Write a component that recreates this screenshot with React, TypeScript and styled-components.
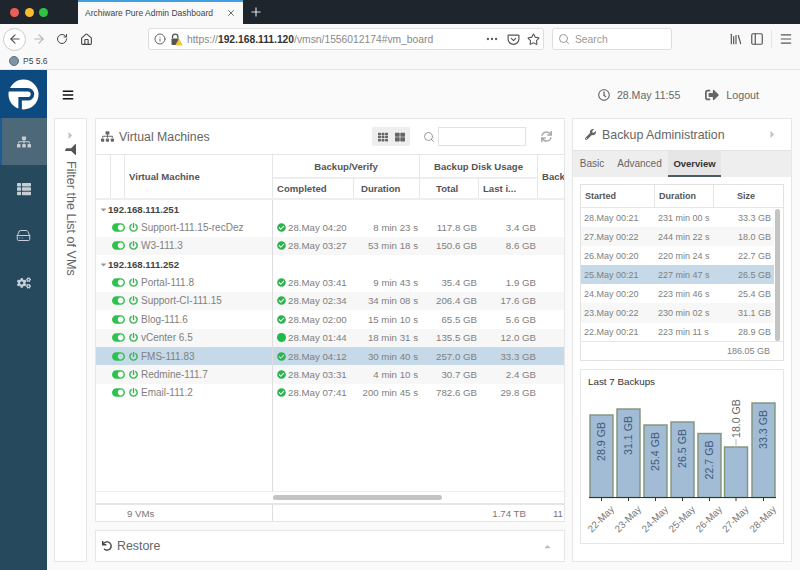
import React from "react";
import styled, { createGlobalStyle } from "styled-components";
import { ArrowLeft, ArrowRight, RotateCw, Home, Info, Ellipsis, Star, Search, Library, PanelLeft, Menu, X, Plus, HardDrive } from "lucide-react";
import { FaSitemap, FaThList, FaCogs, FaFilter, FaWrench, FaUndo, FaRegClock, FaSignOutAlt, FaSync, FaTh, FaThLarge, FaCheckCircle, FaPowerOff, FaToggleOn, FaCaretRight, FaCaretDown, FaCaretUp, FaBars } from "react-icons/fa";

const Global = createGlobalStyle`
  html, body { margin: 0; padding: 0; width: 800px; height: 570px; overflow: hidden; background: #fafafa; }
  * { box-sizing: border-box; }
  body { font-family: "Liberation Sans", Arial, sans-serif; color: #777; }
`;

const Page = styled.div`width: 800px; height: 570px; display: flex; flex-direction: column; overflow: hidden;`;

const TabBar = styled.div`height: 24px; background: #1f252c; display: flex; align-items: stretch; flex: none;`;
const Lights = styled.div`width: 78px; padding-left: 10px; display: flex; align-items: center; gap: 5.5px;`;
const Light = styled.span<{ $c: string }>`width: 9px; height: 9px; border-radius: 50%; background: ${p => p.$c};`;
const BrowserTab = styled.div`width: 165px; background: #f9f9fa; border-top: 2px solid #3f9fe0; display: flex; align-items: center; justify-content: space-between; padding: 0 7px 0 7px; font-size: 8.5px; color: #444; white-space: nowrap;`;
const NewTab = styled.div`width: 26px; display: flex; align-items: center; justify-content: center; color: #ddd;`;

const NavBar = styled.div`height: 30px; background: #f9f9fa; display: flex; align-items: center; flex: none; padding-left: 3px; color: #555;`;
const BackBtn = styled.div`width: 23px; height: 23px; border-radius: 50%; border: 1px solid #ccc; background: #fff; display: flex; align-items: center; justify-content: center; color: #555; flex: none;`;
const NavIcon = styled.div<{ $w: number; $muted?: boolean }>`width: ${p => p.$w}px; flex: none; display: flex; justify-content: center; color: ${p => (p.$muted ? "#b5b5b5" : "#444")};`;
const UrlBar = styled.div`width: 396px; height: 22px; margin-left: 48px; background: #fff; border: 1px solid #ddd; border-radius: 3px; display: flex; align-items: center; padding-left: 5px; flex: none; color: #666;`;
const LockGlyph = styled.svg`margin-left: 4px; flex: none;`;
const UrlText = styled.span`font-size: 10.3px; color: #888; margin-left: 4px; white-space: nowrap; b { color: #333; font-weight: 700; }`;
const UrlTail = styled.div`margin-left: auto; display: flex; align-items: center; gap: 7.5px; padding-right: 3px; color: #555;`;
const SearchBar = styled.div`width: 120px; height: 22px; margin-left: 8px; background: #fff; border: 1px solid #ddd; border-radius: 3px; display: flex; align-items: center; gap: 5px; padding-left: 5px; font-size: 10.3px; color: #999; flex: none;`;
const NavEnd = styled.div`margin-left: auto; display: flex; align-items: center; gap: 7px; padding-right: 7px; color: #555;`;
const Sep = styled.span`width: 1px; height: 18px; background: #e5e5e5;`;

const BookmarkBar = styled.div`height: 16px; background: #f9f9fa; border-bottom: 1px solid #e3e3e3; display: flex; align-items: center; padding: 0 0 1px 9px; gap: 4px; font-size: 8.5px; color: #444; flex: none;`;
const Favicon = styled.span`width: 10px; height: 10px; border-radius: 50%; background: #7d93a6; border: 1px solid #5b6f80; flex: none;`;

const Content = styled.div`flex: 1; display: flex; min-height: 0;`;
const Sidebar = styled.nav`width: 47px; background: #26495e; display: flex; flex-direction: column; flex: none;`;
const Logo = styled.div`height: 48px; background: #0c4a80; display: flex; align-items: center; justify-content: center;`;
const SideItem = styled.div<{ $active?: boolean }>`height: 47px; display: flex; align-items: center; justify-content: center; color: #c5ced4; font-size: 14px; background: ${p => (p.$active ? "#4d6879" : "transparent")}; border-left: 2px solid ${p => (p.$active ? "#1c5c94" : "transparent")}; padding-right: 2px;`;

const Workspace = styled.div`flex: 1; display: flex; flex-direction: column; min-width: 0;`;
const TopBar = styled.header`height: 48px; display: flex; align-items: center; padding: 2px 0 0 15px; color: #666; flex: none;`;
const Burger = styled.span`color: #111; display: flex; font-size: 12px;`;
const Clock = styled.span`margin-left: auto; display: flex; align-items: center; gap: 7px; font-size: 10.6px; svg { font-size: 12px; }`;
const LogoutLink = styled.span`margin: 0 41px 0 25px; display: flex; align-items: center; gap: 7px; font-size: 10.7px; svg { font-size: 14px; }`;

const Panels = styled.div`flex: 1; display: flex; padding: 0 8px 8px 7px; min-height: 0; gap: 7px;`;
const Card = styled.section`background: #fff; border: 1px solid #e6e6e6;`;
const FilterPanel = styled(Card)`width: 33px; margin-right: 1px; flex: none; display: flex; flex-direction: column; align-items: center; padding-top: 11px; color: #666;`;
const FilterLabel = styled.div`writing-mode: vertical-rl; display: flex; align-items: center; gap: 6px; font-size: 12.6px; margin-top: 3px; color: #666; white-space: nowrap; svg { font-size: 11px; transform: rotate(90deg); color: #555; }`;
const CaretBox = styled.span<{ $c?: string }>`display: flex; color: ${p => p.$c || "#c4c4c4"}; font-size: 11px;`;

const MainColumn = styled.div`width: 470px; flex: none; display: flex; flex-direction: column; gap: 8px;`;
const TableCard = styled(Card)`flex: 1; display: flex; flex-direction: column; min-height: 0; overflow: hidden;`;
const PanelHeader = styled.div`height: 35px; display: flex; align-items: center; padding-left: 5px; flex: none; color: #666;`;
const PanelTitle = styled.h2`font-size: 12.3px; font-weight: 400; margin: 0 0 0 5px; color: #666;`;
const ViewToggle = styled.div`margin-left: auto; width: 38px; height: 19px; background: #eee; border-radius: 2px; display: flex; align-items: center; justify-content: space-around; font-size: 10px; color: #666; padding: 0 2px;`;
const SearchGlyph = styled.span`margin-left: 13px; color: #999; display: flex;`;
const SearchBox = styled.div`width: 88px; height: 19px; margin-left: 3px; border: 1px solid #e2e2e2; background: #fff;`;
const Refresh = styled.span`margin: 0 12px 0 15px; color: #aaa; font-size: 11px; display: flex;`;

const COLS = "15px 14px 148px 81px 66px 59px 59px 28px";
const Head = styled.div`display: grid; grid-template-columns: ${COLS}; grid-template-rows: 22px 21px; flex: none; border-top: 1px solid #e6e6e6; border-bottom: 2px solid #eee; overflow: hidden;`;
const HeadCell = styled.div<{ $col: string; $row: string; $align?: string; $pad?: number }>`
  grid-column: ${p => p.$col}; grid-row: ${p => p.$row};
  display: flex; align-items: center; justify-content: ${p => p.$align || "flex-start"};
  padding-left: ${p => p.$pad ?? 0}px; font-size: 9.6px; font-weight: 700; color: #555; white-space: nowrap;
  border-right: 1px solid #e6e6e6;
`;
const SubHeadCell = styled(HeadCell)`border-top: 2px solid #eee;`;

const Body = styled.div`flex: 1; position: relative; min-height: 0; &::before { content: ""; position: absolute; left: 176px; top: 0; bottom: 12px; width: 1px; background: #ddd; }`;
const Rows = styled.div`padding-top: 0;`;
const Row = styled.div<{ $state?: "alt" | "sel" }>`
  display: grid; grid-template-columns: ${COLS}; height: 18.36px; align-items: center; font-size: 9.7px; color: #808080; white-space: nowrap; overflow: hidden;
  background: ${p => (p.$state === "sel" ? "#c6d9e8" : p.$state === "alt" ? "#f7f7f7" : "transparent")};
`;
const GroupRow = styled.div`height: 18.36px; display: flex; align-items: center; padding-left: 3px; gap: 0; font-size: 9.6px; font-weight: 700; color: #444; svg { font-size: 9px; color: #999; }`;
const Toggle = styled.span`grid-column: 1 / 3; padding-left: 16px; display: flex; color: #2ec24d; font-size: 13px;`;
const NameCell = styled.span`display: flex; align-items: center; gap: 3px; padding-left: 4px; font-size: 10px; svg { color: #37b34f; font-size: 9px; flex: none; }`;
const DoneCell = styled.span`display: flex; align-items: center; gap: 2px; padding-left: 4px; svg { color: #2eb24f; font-size: 9px; flex: none; }`;
const Dot = styled.span`width: 9px; height: 9px; border-radius: 50%; background: #1fb84a; flex: none;`;
const NumCell = styled.span`text-align: right; padding-right: 2px;`;

const HScroll = styled.div`position: absolute; left: 177px; width: 169px; bottom: 3px; height: 5px; border-radius: 3px; background: #c4c4c4;`;
const ScrollTrackLine = styled.div`position: absolute; left: 0; right: 0; bottom: 11px; height: 1px; background: #eee;`;
const Foot = styled.div`height: 18px; flex: none; border-top: 2px solid #e6e6e6; display: grid; grid-template-columns: ${COLS}; align-items: center; font-size: 9.7px; color: #777; white-space: nowrap; overflow: hidden;`;
const FootLabel = styled.span`grid-column: 1 / 4; padding-left: 31px; border-right: 1px solid #ddd; height: 100%; display: flex; align-items: center;`;
const FootValue = styled.span<{ $col: string; $pad?: number }>`grid-column: ${p => p.$col}; text-align: right; padding-right: ${p => p.$pad ?? 2}px;`;

const RestoreCard = styled(Card)`height: 32px; flex: none; display: flex; align-items: center; padding: 0 12px 0 6px; font-size: 12.4px; color: #666; gap: 5px; svg { font-size: 10px; color: #444; }`;
const RestoreCaret = styled.span`margin-left: auto; display: flex; svg { color: #bbb; font-size: 9px; }`;

const RightPanel = styled(Card)`width: 220px; flex: none; display: flex; flex-direction: column;`;
const RightHeader = styled.div`height: 31px; display: flex; align-items: center; padding: 0 13px 0 12px; flex: none; gap: 6px; font-size: 12.4px; color: #666; svg { flex: none; }`;
const RightTitle = styled.span`flex: 1; white-space: nowrap;`;
const Tabs = styled.div`height: 27px; background: #eee; display: flex; flex: none; border-top: 1px solid #e3e3e3;`;
const TabItem = styled.div<{ $active?: boolean; $w: number }>`width: ${p => p.$w}px; height: 26px; display: flex; align-items: center; justify-content: center; font-size: ${p => (p.$active ? 9.5 : 10)}px; color: ${p => (p.$active ? "#333" : "#666")}; font-weight: ${p => (p.$active ? 700 : 400)}; background: ${p => (p.$active ? "#e6e6e6" : "transparent")}; border-bottom: 2px solid ${p => (p.$active ? "#4a5c68" : "transparent")};`;
const RightBody = styled.div`padding: 7px 7px 0 7px;`;
const HistTable = styled.div`border: 1px solid #e2e2e2; background: #fff; position: relative; height: 177px;`;
const HIST = "74px 59px 1fr";
const HistHead = styled.div`display: grid; grid-template-columns: ${HIST}; height: 23px; border-bottom: 1px solid #e6e6e6;`;
const HistHeadCell = styled.div<{ $pad: number }>`display: flex; align-items: center; padding-left: ${p => p.$pad}px; font-size: 9px; font-weight: 700; color: #555; border-right: 1px solid #e6e6e6; &:last-child { border-right: 0; }`;
const HistRow = styled.div<{ $state?: "alt" | "sel" }>`display: grid; grid-template-columns: ${HIST}; width: 193px; height: 19.1px; align-items: center; font-size: 9px; color: #7f7f7f; background: ${p => (p.$state === "sel" ? "#c6d9e8" : p.$state === "alt" ? "#f7f7f7" : "transparent")};`;
const HistCell = styled.span<{ $right?: boolean }>`padding-left: ${p => (p.$right ? 0 : 3)}px; padding-right: ${p => (p.$right ? 3 : 0)}px; text-align: ${p => (p.$right ? "right" : "left")};`;
const HistFoot = styled.div`position: absolute; left: 0; right: 0; bottom: 0; height: 19px; border-top: 1px solid #e6e6e6; display: flex; align-items: center; justify-content: flex-end; padding-right: 13px; font-size: 9px; color: #7f7f7f;`;
const VScroll = styled.div`position: absolute; right: 3px; top: 24px; width: 5px; height: 132px; border-radius: 3px; background: #c4c4c4;`;
const ChartCard = styled.div`margin-top: 8px; border: 1px solid #e6e6e6; background: #fff; height: 175px;`;
const ChartTitle = styled.div`height: 22px; padding: 6px 0 0 7px; font-size: 9.8px; color: #333;`;
const ChartSvg = styled.svg`display: block; font-family: "Liberation Sans", Arial, sans-serif;`;

type VM = { name: string; done: string; dur: string; total: string; last: string; state?: "alt" | "sel"; dot?: boolean };
const group1: VM[] = [
  { name: "Support-111.15-recDez", done: "28.May 04:20", dur: "8 min 23 s", total: "117.8 GB", last: "3.4 GB" },
  { name: "W3-111.3", done: "28.May 03:27", dur: "53 min 18 s", total: "150.6 GB", last: "8.6 GB", state: "alt" },
];
const group2: VM[] = [
  { name: "Portal-111.8", done: "28.May 03:41", dur: "9 min 43 s", total: "35.4 GB", last: "1.9 GB" },
  { name: "Support-CI-111.15", done: "28.May 02:34", dur: "34 min 08 s", total: "206.4 GB", last: "17.6 GB", state: "alt" },
  { name: "Blog-111.6", done: "28.May 02:00", dur: "15 min 10 s", total: "65.5 GB", last: "5.6 GB" },
  { name: "vCenter 6.5", done: "28.May 01:44", dur: "18 min 31 s", total: "135.5 GB", last: "12.0 GB", state: "alt", dot: true },
  { name: "FMS-111.83", done: "28.May 04:12", dur: "30 min 40 s", total: "257.0 GB", last: "33.3 GB", state: "sel" },
  { name: "Redmine-111.7", done: "28.May 03:31", dur: "4 min 10 s", total: "30.7 GB", last: "2.4 GB", state: "alt" },
  { name: "Email-111.2", done: "28.May 07:41", dur: "200 min 45 s", total: "782.6 GB", last: "29.8 GB" },
];
const history: { s: string; d: string; z: string; state?: "alt" | "sel" }[] = [
  { s: "28.May 00:21", d: "231 min 00 s", z: "33.3 GB" },
  { s: "27.May 00:22", d: "244 min 22 s", z: "18.0 GB", state: "alt" },
  { s: "26.May 00:20", d: "220 min 24 s", z: "22.7 GB" },
  { s: "25.May 00:21", d: "227 min 47 s", z: "26.5 GB", state: "sel" },
  { s: "24.May 00:20", d: "223 min 46 s", z: "25.4 GB" },
  { s: "23.May 00:22", d: "230 min 02 s", z: "31.1 GB", state: "alt" },
  { s: "22.May 00:21", d: "223 min 11 s", z: "28.9 GB" },
];
const bars = [
  { x: 590, top: 415, v: "28.9 GB", l: "22-May" },
  { x: 617, top: 409, v: "31.1 GB", l: "23-May" },
  { x: 644, top: 425, v: "25.4 GB", l: "24-May" },
  { x: 671, top: 422, v: "26.5 GB", l: "25-May" },
  { x: 698, top: 433.5, v: "22.7 GB", l: "26-May" },
  { x: 724.5, top: 447, v: "18.0 GB", l: "27-May", out: true },
  { x: 752, top: 403, v: "33.3 GB", l: "28-May" },
];

const VMRow = ({ vm }: { vm: VM }) => (
  <Row $state={vm.state}>
    <Toggle><FaToggleOn /></Toggle>
    <NameCell><FaPowerOff />{vm.name}</NameCell>
    <DoneCell>{vm.dot ? <Dot /> : <FaCheckCircle />}{vm.done}</DoneCell>
    <NumCell>{vm.dur}</NumCell>
    <NumCell>{vm.total}</NumCell>
    <NumCell>{vm.last}</NumCell>
  </Row>
);

export default function App() {
  return (
    <Page>
      <Global />
      <TabBar>
        <Lights><Light $c="#ec5f58" /><Light $c="#f6bb2e" /><Light $c="#2cc540" /></Lights>
        <BrowserTab>Archiware Pure Admin Dashboard<X size={10} color="#555" /></BrowserTab>
        <NewTab><Plus size={14} /></NewTab>
      </TabBar>
      <NavBar>
        <BackBtn><ArrowLeft size={14} /></BackBtn>
        <NavIcon $w={26} $muted><ArrowRight size={14} /></NavIcon>
        <NavIcon $w={20}><RotateCw size={12} /></NavIcon>
        <NavIcon $w={28}><Home size={13} /></NavIcon>
        <UrlBar>
          <Info size={12} />
          <LockGlyph width="13" height="13" viewBox="0 0 13 13">
            <path d="M2.5 5.5V3.8a2.7 2.7 0 0 1 5.4 0v1.7" fill="none" stroke="#555" strokeWidth="1.3" />
            <rect x="1.5" y="5.5" width="7.5" height="6.5" rx="1" fill="#555" />
            <path d="M9 5.5l3.8 7H5.2z" fill="#f5c33b" />
          </LockGlyph>
          <UrlText>https://<b>192.168.111.120</b>/vmsn/1556012174#vm_board</UrlText>
          <UrlTail>
            <Ellipsis size={14} />
            <svg width="13" height="13" viewBox="0 0 24 24" fill="none" stroke="currentColor" strokeWidth="2.2" strokeLinecap="round" strokeLinejoin="round"><path d="M3 4h18a1 1 0 0 1 1 1v6a10 10 0 0 1-20 0V5a1 1 0 0 1 1-1z" /><path d="M8 10l4 4 4-4" /></svg>
            <Star size={13} />
          </UrlTail>
        </UrlBar>
        <SearchBar><Search size={12} />Search</SearchBar>
        <NavEnd>
          <Library size={14} />
          <PanelLeft size={14} />
          <Sep />
          <Menu size={14} />
        </NavEnd>
      </NavBar>
      <BookmarkBar><Favicon />P5 5.6</BookmarkBar>
      <Content>
        <Sidebar>
          <Logo>
            <svg width="31" height="31" viewBox="0 0 32 32">
              <circle cx="16" cy="16" r="15.5" fill="#fff" />
              <path d="M0 11h20.5a4.6 4.6 0 0 1 0 9.5H12.5V32" fill="none" stroke="#0c4a80" strokeWidth="3.6" />
            </svg>
          </Logo>
          <SideItem $active><FaSitemap /></SideItem>
          <SideItem><FaThList /></SideItem>
          <SideItem><HardDrive size={15} strokeWidth={1.6} /></SideItem>
          <SideItem><FaCogs /></SideItem>
        </Sidebar>
        <Workspace>
          <TopBar>
            <Burger><FaBars /></Burger>
            <Clock><FaRegClock />28.May 11:55</Clock>
            <LogoutLink><FaSignOutAlt />Logout</LogoutLink>
          </TopBar>
          <Panels>
            <FilterPanel>
              <CaretBox><FaCaretRight /></CaretBox>
              <FilterLabel><FaFilter />Filter the List of VMs</FilterLabel>
            </FilterPanel>
            <MainColumn>
              <TableCard>
                <PanelHeader>
                  <FaSitemap size={13} />
                  <PanelTitle>Virtual Machines</PanelTitle>
                  <ViewToggle><FaTh /><FaThLarge /></ViewToggle>
                  <SearchGlyph><Search size={12} /></SearchGlyph>
                  <SearchBox />
                  <Refresh><FaSync /></Refresh>
                </PanelHeader>
                <Head>
                  <HeadCell $col="1" $row="1 / 3" />
                  <HeadCell $col="2" $row="1 / 3" />
                  <HeadCell $col="3" $row="1 / 3" $pad={4}>Virtual Machine</HeadCell>
                  <HeadCell $col="4 / 6" $row="1" $align="center">Backup/Verify</HeadCell>
                  <HeadCell $col="6 / 8" $row="1" $align="center">Backup Disk Usage</HeadCell>
                  <HeadCell $col="8" $row="1 / 3" $pad={4}>Back</HeadCell>
                  <SubHeadCell $col="4" $row="2" $pad={4}>Completed</SubHeadCell>
                  <SubHeadCell $col="5" $row="2" $pad={7}>Duration</SubHeadCell>
                  <SubHeadCell $col="6" $row="2" $pad={16}>Total</SubHeadCell>
                  <SubHeadCell $col="7" $row="2" $pad={4}>Last i...</SubHeadCell>
                </Head>
                <Body>
                  <Rows>
                    <GroupRow><FaCaretDown />192.168.111.251</GroupRow>
                    {group1.map(v => <VMRow key={v.name} vm={v} />)}
                    <GroupRow><FaCaretDown />192.168.111.252</GroupRow>
                    {group2.map(v => <VMRow key={v.name} vm={v} />)}
                  </Rows>
                  <ScrollTrackLine />
                  <HScroll />
                </Body>
                <Foot>
                  <FootLabel>9 VMs</FootLabel>
                  <FootValue $col="7" $pad={12}>1.74 TB</FootValue>
                  <FootValue $col="8" $pad={3}>11</FootValue>
                </Foot>
              </TableCard>
              <RestoreCard>
                <FaUndo />Restore
                <RestoreCaret><FaCaretUp /></RestoreCaret>
              </RestoreCard>
            </MainColumn>
            <RightPanel>
              <RightHeader>
                <FaWrench size={11} />
                <RightTitle>Backup Administration</RightTitle>
                <CaretBox><FaCaretRight /></CaretBox>
              </RightHeader>
              <Tabs>
                <TabItem $w={38}>Basic</TabItem>
                <TabItem $w={57}>Advanced</TabItem>
                <TabItem $w={53} $active>Overview</TabItem>
              </Tabs>
              <RightBody>
                <HistTable>
                  <HistHead>
                    <HistHeadCell $pad={4}>Started</HistHeadCell>
                    <HistHeadCell $pad={4}>Duration</HistHeadCell>
                    <HistHeadCell $pad={23}>Size</HistHeadCell>
                  </HistHead>
                  {history.map(h => (
                    <HistRow key={h.s} $state={h.state}>
                      <HistCell>{h.s}</HistCell>
                      <HistCell>{h.d}</HistCell>
                      <HistCell $right>{h.z}</HistCell>
                    </HistRow>
                  ))}
                  <VScroll />
                  <HistFoot>186.05 GB</HistFoot>
                </HistTable>
                <ChartCard>
                  <ChartTitle>Last 7 Backups</ChartTitle>
                  <ChartSvg width="202" height="151" viewBox="581 392 202 151">
                    {bars.map(b => {
                      const cx = b.x + 11.5;
                      const ty = b.out ? 438 : b.top + 7;
                      return (
                        <g key={b.l}>
                          <rect x={b.x} y={b.top} width={23} height={497.5 - b.top} fill="#a3bcd6" stroke="#7f9478" strokeWidth="1.4" />
                          {b.out && <line x1={cx} x2={cx} y1={439} y2={447} stroke="#bbb" />}
                          <text
                            transform={`rotate(-90 ${cx + 3.8} ${ty})`}
                            x={cx + 3.8}
                            y={ty}
                            textAnchor={b.out ? "start" : "end"}
                            fontSize="10.6"
                            fill={b.out ? "#666" : "#3d5a7c"}
                          >{b.v}</text>
                          <line x1={cx} x2={cx} y1={497.5} y2={501} stroke="#333" />
                          <text transform={`rotate(-45 ${cx + 11.5} 508)`} x={cx + 11.5} y={508} textAnchor="end" fontSize="9.8" fill="#777" dominantBaseline="middle">{b.l}</text>
                        </g>
                      );
                    })}
                    <line x1="589" x2="776" y1="497.5" y2="497.5" stroke="#333" />
                  </ChartSvg>
                </ChartCard>
              </RightBody>
            </RightPanel>
          </Panels>
        </Workspace>
      </Content>
    </Page>
  );
}
